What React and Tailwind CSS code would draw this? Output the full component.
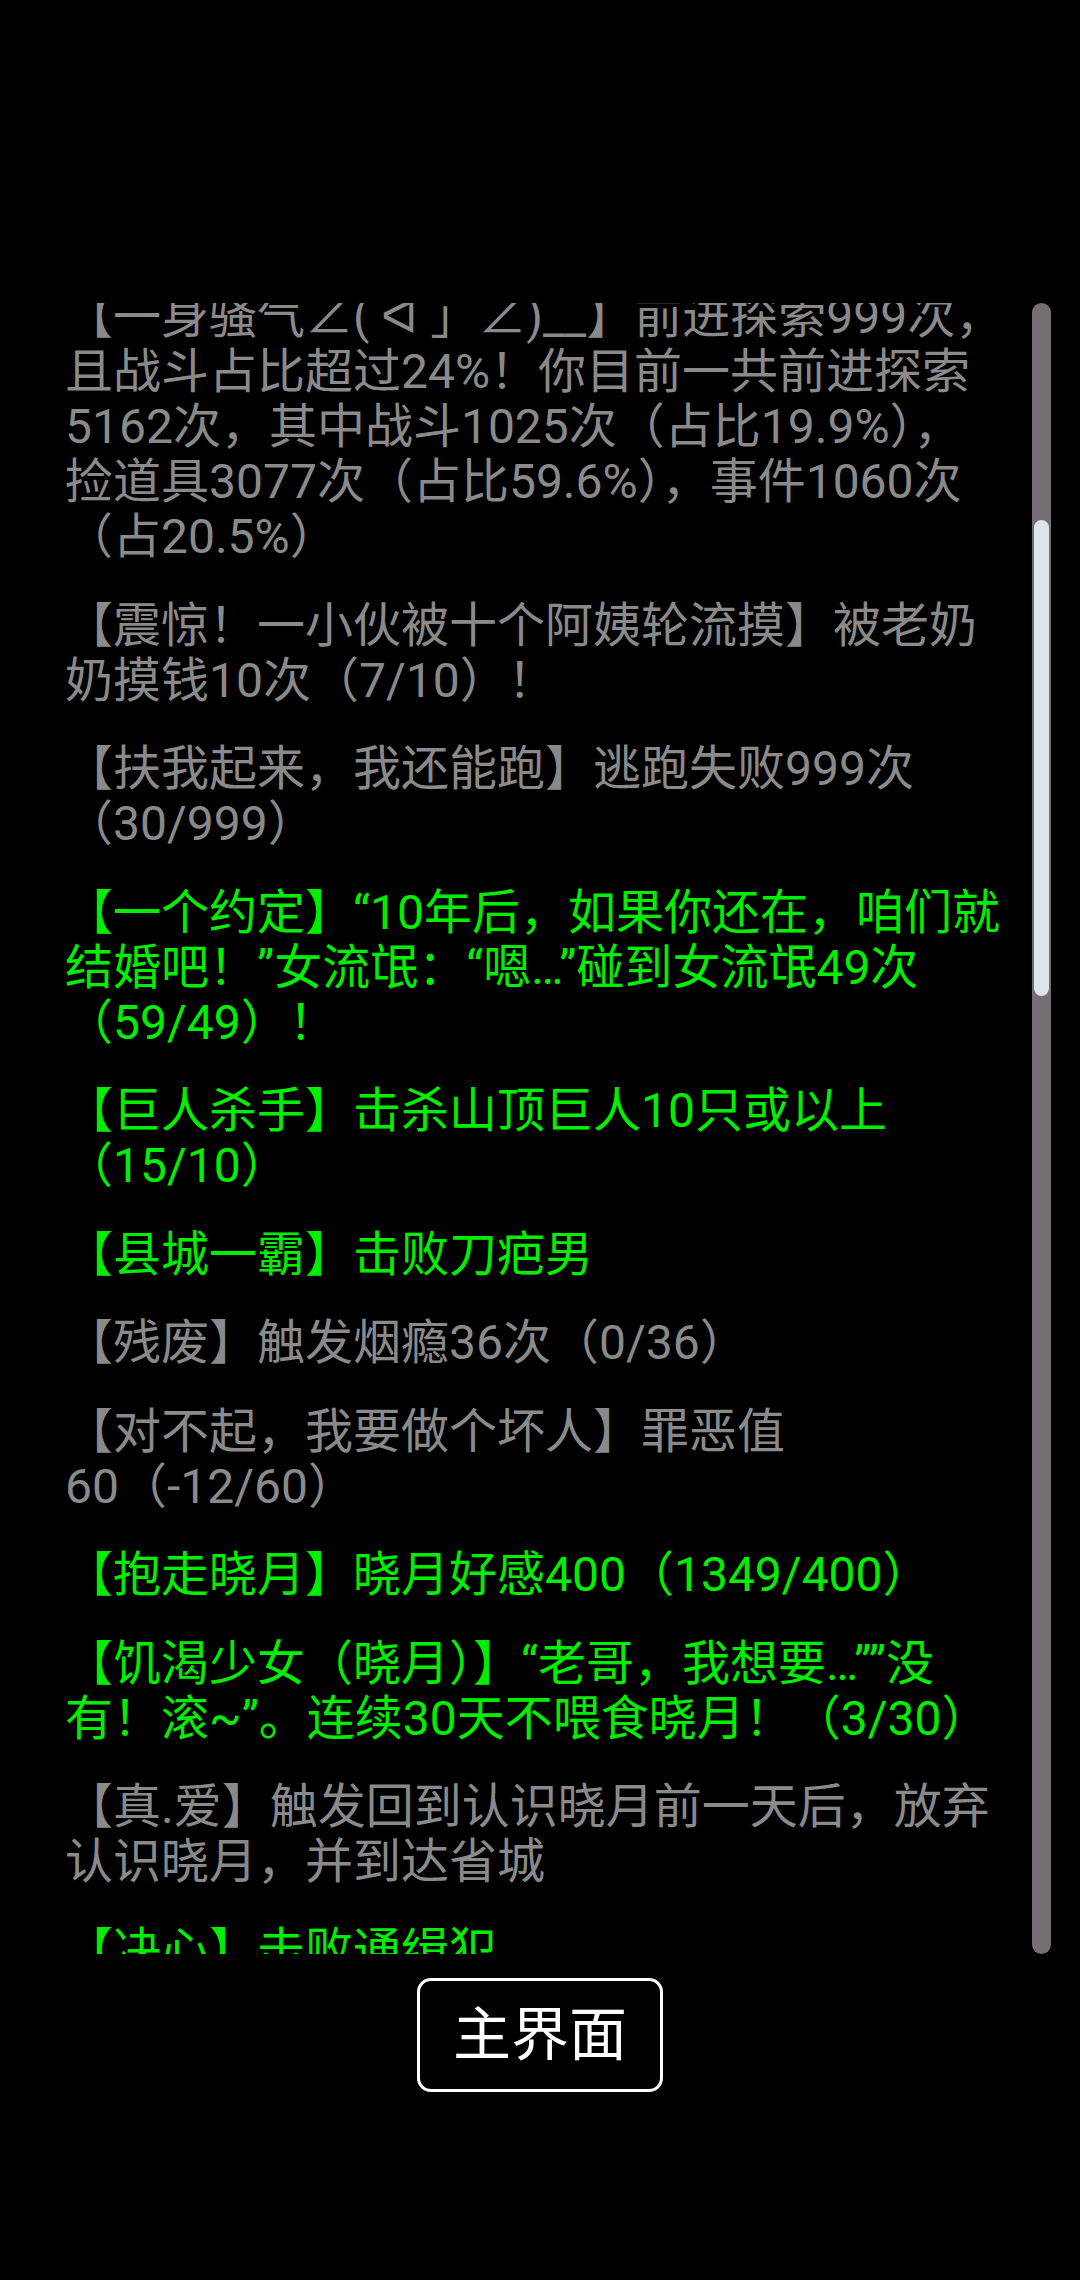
import React from "react";

// 成就列表（已滚动到中间位置）
const achievements = [
    {
        done: false,
        lines: [
            "【一身骚气∠( ᐛ 」∠)__】前进探索999次，",
            "且战斗占比超过24%！你目前一共前进探索",
            "5162次，其中战斗1025次（占比19.9%），",
            "捡道具3077次（占比59.6%），事件1060次",
            "（占20.5%）",
        ],
    },
    {
        done: false,
        lines: ["【震惊！一小伙被十个阿姨轮流摸】被老奶", "奶摸钱10次（7/10）！"],
    },
    {
        done: false,
        lines: ["【扶我起来，我还能跑】逃跑失败999次", "（30/999）"],
    },
    {
        done: true,
        lines: [
            "【一个约定】“10年后，如果你还在，咱们就",
            "结婚吧！”女流氓：“嗯…”碰到女流氓49次",
            "（59/49）！",
        ],
    },
    {
        done: true,
        lines: ["【巨人杀手】击杀山顶巨人10只或以上", "（15/10）"],
    },
    { done: true, lines: ["【县城一霸】击败刀疤男"] },
    { done: false, lines: ["【残废】触发烟瘾36次（0/36）"] },
    {
        done: false,
        lines: ["【对不起，我要做个坏人】罪恶值", "60（-12/60）"],
    },
    { done: true, lines: ["【抱走晓月】晓月好感400（1349/400）"] },
    {
        done: true,
        lines: [
            "【饥渴少女（晓月）】“老哥，我想要…””没",
            "有！滚~”。连续30天不喂食晓月！（3/30）",
        ],
    },
    {
        done: false,
        lines: [
            "【真.爱】触发回到认识晓月前一天后，放弃",
            "认识晓月，并到达省城",
        ],
    },
    { done: true, lines: ["【决心】击败通缉犯"] },
];

export default function App() {
    return (
        <div className="w-[1080px] h-[2280px] bg-black flex flex-col font-['Roboto','Noto_Sans_CJK_SC','Noto_Sans_CJK_TC',sans-serif]">
            <div className="h-[303px]" />

            {/* 滚动区域 */}
            <div className="h-[1651px] flex flex-row">
                <div className="flex-1 overflow-hidden pl-[65px]">
                    <div className="-mt-[14px] flex flex-col gap-[33.5px]">
                        {achievements.map((a, idx) => (
                            <div
                                key={idx}
                                className={
                                    a.done
                                        ? "text-[48px] leading-[55px] text-[#00ee00]"
                                        : "text-[48px] leading-[55px] text-[#8a8a8a]"
                                }
                            >
                                {a.lines.map((line, i) => (
                                    <div key={i} className="whitespace-nowrap">
                                        {line}
                                    </div>
                                ))}
                            </div>
                        ))}
                    </div>
                </div>

                {/* 滚动条 */}
                <div className="w-[19px] mr-[29px] rounded-full bg-[#776e74] flex flex-col items-center">
                    <div className="mt-[217px] h-[476px] w-[15px] rounded-full bg-[#dfe4e7]" />
                </div>
            </div>

            <div className="flex justify-center pt-[24px]">
                <button className="w-[246px] h-[114px] border-[3px] border-white rounded-[14px] text-white text-[58px] leading-none flex items-center justify-center">
                    主界面
                </button>
            </div>
        </div>
    );
}
